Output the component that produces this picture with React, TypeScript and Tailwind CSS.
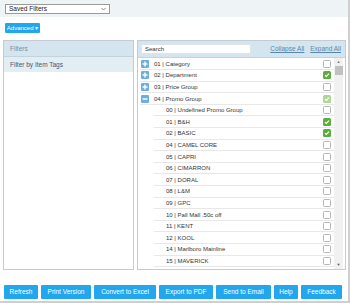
import React from 'react';

const rows: { label: string; level: 0 | 1; icon?: 'plus' | 'minus'; check: 'none' | 'on' | 'part' }[] = [
    { label: '01 | Category', level: 0, icon: 'plus', check: 'none' },
    { label: '02 | Department', level: 0, icon: 'plus', check: 'on' },
    { label: '03 | Price Group', level: 0, icon: 'plus', check: 'none' },
    { label: '04 | Promo Group', level: 0, icon: 'minus', check: 'part' },
    { label: '00 | Undefined Promo Group', level: 1, check: 'none' },
    { label: '01 | B&H', level: 1, check: 'on' },
    { label: '02 | BASIC', level: 1, check: 'on' },
    { label: '04 | CAMEL CORE', level: 1, check: 'none' },
    { label: '05 | CAPRI', level: 1, check: 'none' },
    { label: '06 | CIMARRON', level: 1, check: 'none' },
    { label: '07 | DORAL', level: 1, check: 'none' },
    { label: '08 | L&M', level: 1, check: 'none' },
    { label: '09 | GPC', level: 1, check: 'none' },
    { label: '10 | Pall Mall .50c off', level: 1, check: 'none' },
    { label: '11 | KENT', level: 1, check: 'none' },
    { label: '12 | KOOL', level: 1, check: 'none' },
    { label: '14 | Marlboro Mainline', level: 1, check: 'none' },
    { label: '15 | MAVERICK', level: 1, check: 'none' },
];

const buttons = [
    { label: 'Refresh', w: 'w-[34px]' },
    { label: 'Print Version', w: 'w-[50px]' },
    { label: 'Convert to Excel', w: 'w-[62px]' },
    { label: 'Export to PDF', w: 'w-[54px]' },
    { label: 'Send to Email', w: 'w-[55px]' },
    { label: 'Help', w: 'w-[24px]' },
    { label: 'Feedback', w: 'w-[41px]' },
];

const TreeIcon = ({ kind }: { kind: 'plus' | 'minus' }) => (
    <div className="w-[8px] h-[8px] bg-[#6eaede] rounded-[1px] flex items-center justify-center">
        <svg width="6" height="6" viewBox="0 0 6 6">
            <rect x="0.5" y="2.3" width="5" height="1.4" fill="#fff" />
            {kind === 'plus' && <rect x="2.3" y="0.5" width="1.4" height="5" fill="#fff" />}
        </svg>
    </div>
);

const Check = ({ state }: { state: 'none' | 'on' | 'part' }) => {
    if (state === 'none') {
        return <div className="w-[8px] h-[8px] rounded-[1.5px] border border-[#b5b5b5] bg-white" />;
    }
    return (
        <div className={`w-[8px] h-[8px] rounded-[1.5px] flex items-center justify-center ${state === 'on' ? 'bg-[#5bae3c]' : 'bg-[#acd896]'}`}>
            <svg width="6" height="6" viewBox="0 0 6 6">
                <path d="M1 3.2 L2.4 4.5 L5 1.6" stroke="#fff" strokeWidth="1.2" fill="none" />
            </svg>
        </div>
    );
};

const App = () => {
    return (
        <div className="w-[350px] h-[303px] bg-white border-r-2 border-b-2 border-[#cfcfcf] font-['Liberation_Sans',Arial,sans-serif] text-[#333] overflow-hidden">
            {/* top bar */}
            <div className="h-[17px] bg-[#eef3f6] pt-[4px] pl-[5px]">
                <div className="w-[105px] h-[10px] border border-[#9a9a9a] bg-white flex items-center justify-between px-[3px]">
                    <span className="text-[6.5px] leading-none text-[#222]">Saved Filters</span>
                    <svg width="5" height="4" viewBox="0 0 5 4">
                        <path d="M0.5 1 L2.5 3 L4.5 1" stroke="#666" strokeWidth="0.8" fill="none" />
                    </svg>
                </div>
            </div>

            <div className="pl-[5px] pt-[6px]">
                <div className="w-[35px] h-[10px] bg-[#22a6ee] rounded-[1px] text-white text-[6px] leading-none flex items-center justify-center">
                    Advanced ▾
                </div>
            </div>

            {/* panels */}
            <div className="flex gap-[3px] pl-[3px] pr-[2px] mt-[7px] h-[230px]">
                <div className="w-[131px] border border-[#c3ccd3] flex flex-col">
                    <div className="h-[16px] bg-[#d5e5ef] border-b border-[#c3d3de] flex items-center pl-[6px] text-[6.5px] text-[#7090a8]">
                        Filters
                    </div>
                    <div className="h-[15px] bg-[#e2edf4] flex items-center pl-[6px] text-[6.5px] text-[#3d5a78]">
                        Filter by Item Tags
                    </div>
                </div>

                <div className="flex-1 border border-[#c3ccd3] flex flex-col">
                    <div className="h-[17px] bg-[#d5e5ef] border-b border-[#c3d3de] flex items-center pl-[3px] pr-[4px]">
                        <div className="w-[110px] h-[10px] bg-white border border-[#dde5eb] flex items-center pl-[3px] text-[6px] text-[#333]">
                            Search
                        </div>
                        <div className="ml-auto flex gap-[6px] text-[6.5px] text-[#5586ad] underline">
                            <span>Collapse All</span>
                            <span>Expand All</span>
                        </div>
                    </div>
                    <div className="flex flex-1 min-h-0">
                        <div className="flex-1 flex flex-col pt-[0.5px]">
                            {rows.map((r, i) => (
                                <div key={i} className={`h-[11.6px] flex items-center border-b border-[#e8e8e8] pr-[3px] ${r.level === 0 ? 'ml-[2px] pl-[1px]' : 'ml-[16px] pl-[12px]'}`}>
                                    {r.icon && <TreeIcon kind={r.icon} />}
                                    <span className={`text-[6px] leading-none text-[#333] ${r.icon ? 'ml-[5px]' : ''}`}>{r.label}</span>
                                    <div className="ml-auto">
                                        <Check state={r.check} />
                                    </div>
                                </div>
                            ))}
                        </div>
                        <div className="w-[9px] bg-[#f1f1f1] flex flex-col items-center mr-[2px]">
                            <div className="h-[8px] flex items-center text-[4px] text-[#777]">▲</div>
                            <div className="w-[8px] h-[9px] bg-[#c1c1c1]" />
                            <div className="flex-1" />
                            <div className="h-[8px] flex items-center text-[4px] text-[#555]">▼</div>
                        </div>
                    </div>
                </div>
            </div>

            {/* footer buttons */}
            <div className="flex gap-[3px] pl-[4px] mt-[15px]">
                {buttons.map((b) => (
                    <div key={b.label} className={`${b.w} h-[14px] bg-[#22a6ee] rounded-[1px] text-white text-[6.5px] leading-none flex items-center justify-center whitespace-nowrap`}>
                        {b.label}
                    </div>
                ))}
            </div>
        </div>
    );
};

export default App;
